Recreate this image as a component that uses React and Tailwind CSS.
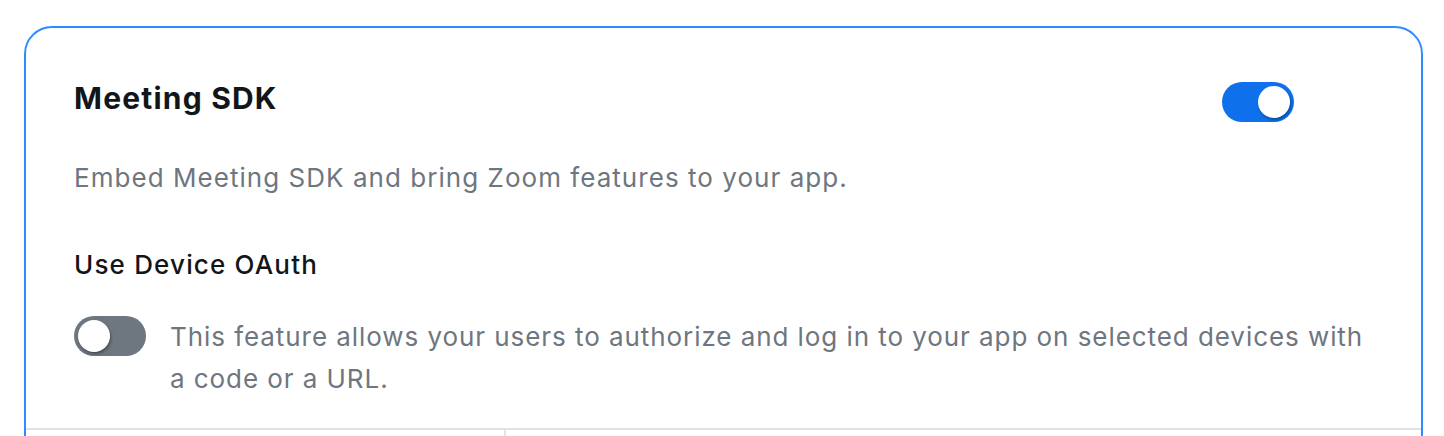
import React, { useState } from 'react';

function Toggle({ on, onChange }) {
  return (
    <button
      type="button"
      onClick={() => onChange(!on)}
      className={
        'relative shrink-0 w-[72px] h-[40px] rounded-full transition-colors ' +
        (on ? 'bg-[#0e71eb]' : 'bg-[#6e7680]')
      }
    >
      <span
        className={
          'absolute top-[4px] w-[32px] h-[32px] rounded-full bg-white shadow-[1px_2px_3px_rgba(0,0,0,0.35)] transition-all ' +
          (on ? 'left-[36px]' : 'left-[4px]')
        }
      />
    </button>
  );
}

export default function App() {
  const [sdk, setSdk] = useState(true);
  const [deviceOAuth, setDeviceOAuth] = useState(false);

  return (
    <div className="h-[436px] overflow-hidden bg-white font-['Inter',sans-serif]">
      <div className="ml-[24px] mt-[26px] w-[1399px] border-2 border-[#2d8cff] rounded-[28px]">
        <div className="pl-[48px] pr-[48px] pt-[50px] pb-[28px]">
          <div className="flex items-start justify-between pr-[79px]">
            <h2 className="text-[30px] leading-[40px] font-bold tracking-[0.04em] text-[#131619]">Meeting SDK</h2>
            <div className="pt-[4px]">
              <Toggle on={sdk} onChange={setSdk} />
            </div>
          </div>
          <p className="mt-[34px] text-[26px] leading-[32px] tracking-[0.04em] text-[#6e7680]">
            Embed Meeting SDK and bring Zoom features to your app.
          </p>
          <h3 className="mt-[55px] text-[26px] leading-[32px] font-medium tracking-[0.045em] text-[#131619]">Use Device OAuth</h3>
          <div className="mt-[35px] flex items-start gap-[24px]">
            <Toggle on={deviceOAuth} onChange={setDeviceOAuth} />
            <p className="text-[26px] leading-[42px] tracking-[0.036em] text-[#6e7680]">
              This feature allows your users to authorize and log in to your app on selected devices with a code or a URL.
            </p>
          </div>
        </div>
        <div className="grid grid-cols-[480px_1fr] border-t-2 border-[#dfe3e8] h-[120px]">
          <div className="border-r-2 border-[#dfe3e8]" />
          <div />
        </div>
      </div>
    </div>
  );
}
